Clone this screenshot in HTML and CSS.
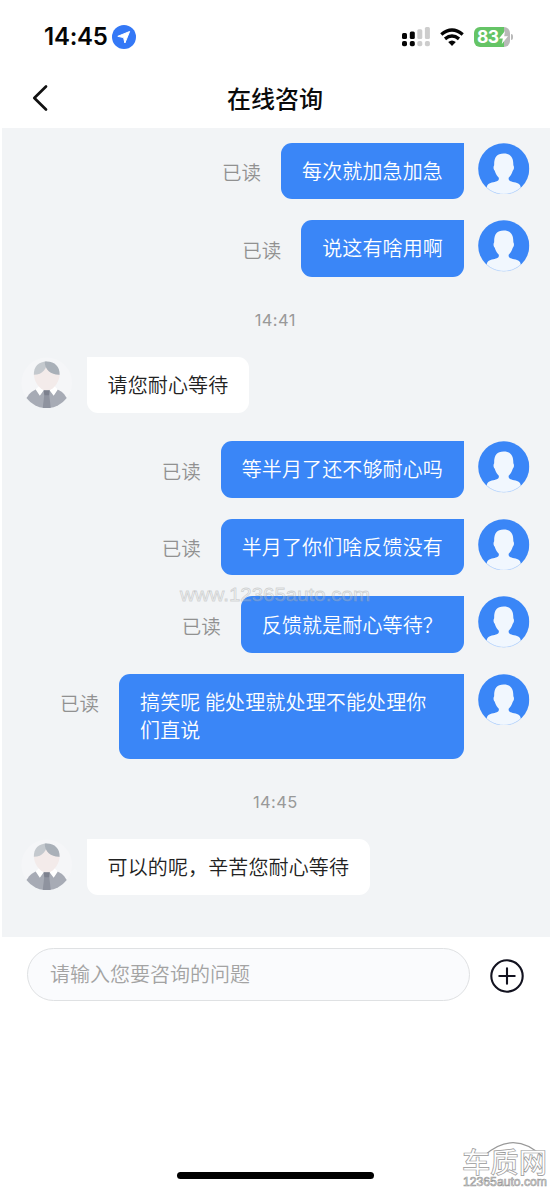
FILE: index.html
```html
<!DOCTYPE html>
<html lang="zh-CN">
<head>
<meta charset="utf-8">
<title>在线咨询</title>
<link rel="stylesheet" href="styles.css">
</head>
<body>
<svg class="defs" width="0" height="0">
  <symbol id="user" viewBox="0 0 52 52">
    <clipPath id="userClip"><circle cx="26" cy="26" r="25.7"/></clipPath>
    <circle cx="26" cy="26" r="25.8" fill="#3a86f7"/>
    <path clip-path="url(#userClip)" fill="#f1f7fe" d="M26 10.700C19 10.700 16.200 14.500 16.300 22.500C15.300 24 15.500 26.800 16.900 28C17.800 31.500 19.600 33.400 21 35C21.600 38.500 18.500 38.900 14 40C10 41 8.800 43 8.700 46V52H43.300V46C43.200 43 42 41 38 40C33.500 38.900 30.400 38.500 31 35C32.400 33.400 34.200 31.500 35.100 28C36.500 26.800 36.700 24 35.700 22.500C35.800 14.500 33 10.700 26 10.700Z"/>
    <path d="M9 45.300A25.600 25.600 0 0 0 43 45.300" fill="none" stroke="#c3dcfc" stroke-width=".8"/>
  </symbol>
  <symbol id="agent" viewBox="0 0 52 52">
    <circle cx="26" cy="26" r="25.5" fill="#f5f6f8"/>
    <path d="M5.500 41.500C9 35.500 13 33 19 31.200H32.500C39 33 43 35.500 46.200 41.500A25.500 25.500 0 0 1 5.500 41.500Z" fill="#a7abb5"/>
    <path d="M18.500 29L14.800 32.800L19 39L23 33.500H28.800L33 39L37.200 32.800L33.300 29Z" fill="#fff"/>
    <path d="M20 26H32V31.300C30 34.500 22 34.500 20 31.300Z" fill="#f1e9e8"/>
    <path d="M13 17C13 24 17 30 21 32.300Q26 34.500 31 32.300C35 30 39 24 39 17L26 7Z" fill="#f3ebea"/>
    <path d="M13 18C12.500 9.500 18 4.500 26 4.500C26.800 11 22 18 13 18Z" fill="#c4c9ce"/>
    <path d="M24 4.600C33 3.500 39.300 9 39 18C31 18.500 23.600 13 24 4.600Z" fill="#a9b0b8"/>
    <path d="M23.500 38H28.500L30 51.200Q26 52 22 51.200Z" fill="#8f939f"/>
    <path d="M22.900 33.500H29L28.500 38.500H23.500Z" fill="#7d818e"/>
  </symbol>
</svg>
<div class="phone">
  <header class="status">
    <span class="clock">14:45</span>
    <svg class="location" viewBox="0 0 24 24"><circle cx="12" cy="12" r="12" fill="#3478f6"/><path d="M17.600 6.500L12.900 18L11.600 12.600L5.800 11.300Z" fill="#fff" stroke="#fff" stroke-width="1" stroke-linejoin="round"/></svg>
    <svg class="signal" viewBox="0 0 28 20">
      <g fill="#050505"><rect x="0" y="6" width="5" height="6" rx="1.500"/><rect x="7.800" y="4.500" width="5" height="7.500" rx="1.500"/><rect x="0" y="14" width="5" height="5.300" rx="1.800"/><rect x="7.800" y="14" width="5" height="5.300" rx="1.800"/></g>
      <g fill="#cdcdcd"><rect x="15.300" y="2.300" width="5" height="9.700" rx="1.500"/><rect x="22.900" y="0" width="5" height="12" rx="1.500"/><rect x="15.300" y="14" width="5" height="5.300" rx="1.800"/><rect x="22.900" y="14" width="5" height="5.300" rx="1.800"/></g>
    </svg>
    <svg class="wifi" viewBox="0 0 24 18"><g fill="none" stroke="#050505" stroke-width="3.300"><path d="M1.300 6.600Q12 -2.600 22.700 6.600"/><path d="M5 10.900Q12 5.200 19 10.900"/></g><path d="M8.200 14Q12 11 15.800 14L12 17.900Z" fill="#050505"/></svg>
    <span class="battery"><span class="level">83</span><svg class="bolt" viewBox="0 0 9 13"><path d="M6 0L0 7.500H3.800L2.800 13L9 5.200H5.200Z" fill="#fff"/></svg></span>
  </header>
  <nav class="titlebar">
    <svg class="back" viewBox="0 0 16 28"><path d="M14 2.500L2.300 14L14 25.500" fill="none" stroke="#111" stroke-width="2.700" stroke-linecap="round" stroke-linejoin="round"/></svg>
    <h1 class="title">在线咨询</h1>
  </nav>
  <main class="chat">
    <div class="row mine"><span class="read">已读</span><p class="bubble">每次就加急加急</p><svg class="avatar"><use href="#user"/></svg></div>
    <div class="row mine"><span class="read">已读</span><p class="bubble">说这有啥用啊</p><svg class="avatar"><use href="#user"/></svg></div>
    <time class="time">14:41</time>
    <div class="row"><svg class="avatar"><use href="#agent"/></svg><p class="bubble">请您耐心等待</p></div>
    <div class="row mine reply"><span class="read">已读</span><p class="bubble">等半月了还不够耐心吗</p><svg class="avatar"><use href="#user"/></svg></div>
    <div class="row mine"><span class="read">已读</span><p class="bubble">半月了你们啥反馈没有</p><svg class="avatar"><use href="#user"/></svg></div>
    <div class="row mine"><span class="read">已读</span><p class="bubble">反馈就是耐心等待？</p><svg class="avatar"><use href="#user"/></svg></div>
    <div class="row mine"><span class="read">已读</span><p class="bubble wide">搞笑呢 能处理就处理不能处理你<br>们直说</p><svg class="avatar"><use href="#user"/></svg></div>
    <time class="time">14:45</time>
    <div class="row"><svg class="avatar"><use href="#agent"/></svg><p class="bubble">可以的呢，辛苦您耐心等待</p></div>
    <svg class="site-mark" viewBox="0 0 200 24"><text x="4" y="17" textLength="190" lengthAdjust="spacingAndGlyphs">www.12365auto.com</text></svg>
  </main>
  <footer class="composer">
    <div class="field">请输入您要咨询的问题</div>
    <svg class="add" viewBox="0 0 34 34"><circle cx="17" cy="17" r="15.700"/><path d="M17 9.300V24.700M9.300 17H24.700"/></svg>
  </footer>
  <div class="home"></div>
  <svg class="logo-mark" viewBox="0 0 90 54">
    <path class="arc" d="M25 18Q55 -8 84 21"/>
    <text class="logo-name" x="2" y="36" textLength="85" lengthAdjust="spacingAndGlyphs">车质网</text>
    <text class="logo-url" x="3" y="49" textLength="84" lengthAdjust="spacingAndGlyphs">12365auto.com</text>
  </svg>
</div>
</body>
</html>
```
FILE: styles.css
```css
* { box-sizing: border-box; }
body { margin: 0; background: #fff; font-family: "Noto Sans CJK SC", sans-serif; }
.defs { position: absolute; }
.phone { position: relative; width: 550px; height: 1190px; display: flex; flex-direction: column; overflow: hidden; background: #fff; }
.status { height: 72px; flex: none; display: flex; align-items: center; padding: 2px 40px 0 44px; }
.clock { font: 600 24px/30px Inter, sans-serif; letter-spacing: -.25px; color: #050505; width: 68px; white-space: nowrap; }
.location { width: 24px; height: 24px; }
.signal { width: 28px; height: 20px; margin-left: auto; }
.wifi { width: 24px; height: 18px; margin: 0 10px 0 10px; }
.battery { position: relative; width: 36px; height: 20px; border-radius: 6px; background: linear-gradient(90deg, #65c466 0 30px, #b9b9b9 30px); display: flex; align-items: center; padding-left: 3px; }
.battery::after { content: ""; position: absolute; right: -3px; top: 7px; width: 2px; height: 6px; border-radius: 0 3px 3px 0; background: #b9b9b9; }
.level { font: 700 17.5px/20px Inter, sans-serif; color: #fff; letter-spacing: -.6px; }
.bolt { width: 9px; height: 13px; flex: none; }
.titlebar { height: 56px; flex: none; display: grid; grid-template-columns: 100px 1fr 100px; align-items: center; padding-bottom: 5px; }
.back { width: 16px; height: 28px; margin-left: 32px; }
.title { margin: 0; text-align: center; font-size: 24px; line-height: 34px; font-weight: 500; color: #0a0a0a; }
.chat { position: relative; height: 809px; flex: none; margin-left: 2px; background: #f2f4f6; padding: 14.500px 20.500px 0 19px; display: flex; flex-direction: column; gap: 21px; }
.row { display: flex; align-items: flex-start; gap: 14px; flex: none; }
.mine { justify-content: flex-end; }
.reply { margin-top: 7px; }
.avatar { width: 51.5px; height: 51.5px; flex: none; display: block; }
.bubble { margin: 0; padding: 14.15px 21px; font-size: 20px; font-weight: 350; line-height: 28.3px; letter-spacing: .13px; border-radius: 0 11px 11px 11px; background: #fff; color: #222; white-space: nowrap; }
.mine .bubble { background: #3a86f7; color: #fff; border-radius: 11px 0 11px 11px; }
.bubble.wide { width: 345px; }
.read { font-size: 19.5px; font-weight: 350; line-height: 28px; color: #919191; margin: 15.5px 6px 0 0; }
.time { text-align: center; font: 400 16.5px/24px Inter, sans-serif; letter-spacing: .35px; color: #999; height: 38px; padding-top: 10.5px; flex: none; }
.site-mark { position: absolute; left: 174px; top: 456px; width: 200px; height: 24px; font: 400 19px "Liberation Sans", sans-serif; fill: rgba(255,255,255,.2); stroke: rgba(150,150,150,.38); stroke-width: .8px; }
.composer { display: flex; align-items: center; height: 77px; flex: none; padding: 0 26px 0 27px; }
.field { width: 443px; height: 53px; border: 1.500px solid #dfe1e3; border-radius: 27px; background: #fafbfd; padding-left: 22px; font-size: 20px; font-weight: 350; line-height: 50px; color: #a3a3a3; margin: -2px 19.5px 0 0; }
.add { width: 34px; height: 34px; fill: none; stroke: #12121f; stroke-width: 2.1px; stroke-linecap: round; }
.home { margin: 158px 0 0 177px; width: 197px; height: 7px; border-radius: 4px; background: #000; flex: none; }
.logo-mark { position: absolute; left: 460px; top: 1137px; width: 90px; height: 54px; fill: #fff; stroke: #999; stroke-width: .7px; }
.arc { fill: none; stroke-width: 1.2px; }
.logo-name { font: 500 28px "Noto Sans CJK SC", sans-serif; }
.logo-url { font: 400 12.5px "Liberation Sans", sans-serif; }
```
